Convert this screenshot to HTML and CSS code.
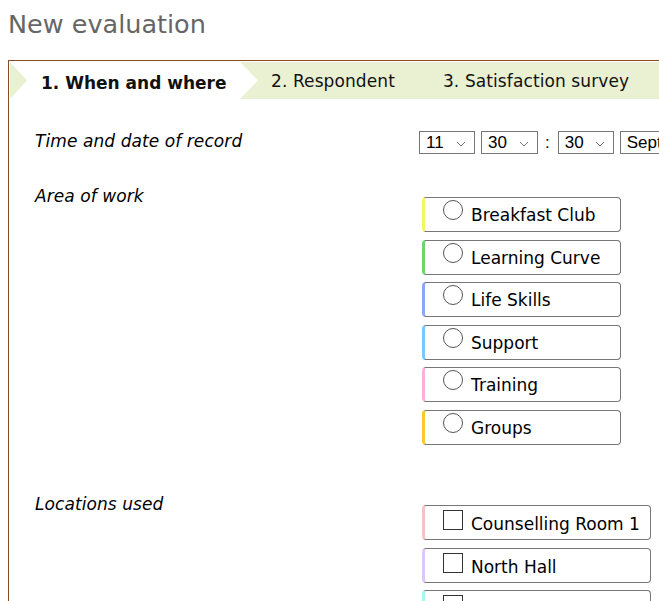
FILE: index.html
```html
<!DOCTYPE html>
<html>
<head>
<meta charset="utf-8">
<title>New evaluation</title>
<link rel="stylesheet" href="styles.css">
</head>
<body>
<h1 class="title">New evaluation</h1>
<div class="panel">
  <div class="tabbar">
    <div class="tab tab-active">1. When and where</div>
    <div class="tab tab-2">2. Respondent</div>
    <div class="tab tab-3">3. Satisfaction survey</div>
  </div>
  <div class="content">
    <div class="row">
      <div class="label">Time and date of record</div>
      <div class="controls time-row">
        <div class="sel sel-h"><span>11</span><svg class="chev" width="10" height="6" viewBox="0 0 10 6"><path d="M1 1 L5 5 L9 1" fill="none" stroke="#6d6d6d" stroke-width="1"/></svg></div>
        <div class="sel sel-m"><span>30</span><svg class="chev" width="10" height="6" viewBox="0 0 10 6"><path d="M1 1 L5 5 L9 1" fill="none" stroke="#6d6d6d" stroke-width="1"/></svg></div>
        <span class="colon">:</span>
        <div class="sel sel-s"><span>30</span><svg class="chev" width="10" height="6" viewBox="0 0 10 6"><path d="M1 1 L5 5 L9 1" fill="none" stroke="#6d6d6d" stroke-width="1"/></svg></div>
        <div class="sel sel-mon"><span>September</span><svg class="chev" width="10" height="6" viewBox="0 0 10 6"><path d="M1 1 L5 5 L9 1" fill="none" stroke="#6d6d6d" stroke-width="1"/></svg></div>
      </div>
    </div>
    <div class="row">
      <div class="label">Area of work</div>
      <div class="controls options options-radio">
        <div class="opt c-yellow"><span class="radio"></span><span class="opt-text">Breakfast Club</span></div>
        <div class="opt c-green"><span class="radio"></span><span class="opt-text">Learning Curve</span></div>
        <div class="opt c-blue"><span class="radio"></span><span class="opt-text">Life Skills</span></div>
        <div class="opt c-sky"><span class="radio"></span><span class="opt-text">Support</span></div>
        <div class="opt c-pink"><span class="radio"></span><span class="opt-text">Training</span></div>
        <div class="opt c-amber"><span class="radio"></span><span class="opt-text">Groups</span></div>
      </div>
    </div>
    <div class="row">
      <div class="label">Locations used</div>
      <div class="controls options options-check">
        <div class="opt opt-wide c-rose"><span class="check"></span><span class="opt-text">Counselling Room 1</span></div>
        <div class="opt opt-wide c-lilac"><span class="check"></span><span class="opt-text">North Hall</span></div>
        <div class="opt opt-wide c-cyan"><span class="check"></span><span class="opt-text">South Hall</span></div>
      </div>
    </div>
  </div>
</div>
</body>
</html>
```

FILE: styles.css
```css
html {
  overflow: hidden;
}
body {
  margin: 0;
  padding: 0 0 0 8px;
  font-family: "DejaVu Sans", Verdana, sans-serif;
  font-size: 17px;
  color: #000;
  background: #fff;
  width: 1000px;
}
.title {
  margin: 9px 0 21px 0;
  font-size: 25.5px;
  line-height: 30px;
  font-weight: normal;
  color: #666;
}
.panel {
  border: 1px solid #8b4a24;
  padding: 1px;
  width: 900px;
  height: 700px;
}
.tabbar {
  display: flex;
  height: 37px;
  background: #e9f1d2;
}
.tab {
  box-sizing: border-box;
  height: 37px;
  padding-top: 1px;
  line-height: 36px;
  white-space: nowrap;
  color: #111;
  letter-spacing: 0.1px;
}
.tab-active {
  width: 248px;
  padding: 6px 0 0 31px;
  line-height: 31px;
  font-weight: bold;
  letter-spacing: 0;
  background: #fff;
  clip-path: polygon(0 0, 230px 0, 248px 50%, 230px 100%, 0 100%, 17px 50%);
}
.tab-2 {
  padding-left: 13px;
  padding-right: 24px;
}
.tab-3 {
  padding-left: 24px;
  padding-right: 24px;
}
.content {
  padding: 32px 0 0 25px;
}
.row {
  display: grid;
  grid-template-columns: 384px 1fr;
  margin-bottom: 32px;
}
.label {
  font-style: italic;
  line-height: 20px;
  letter-spacing: 0.08px;
}
.time-row {
  display: flex;
  align-items: center;
}
.sel {
  display: flex;
  align-items: center;
  justify-content: space-between;
  box-sizing: border-box;
  height: 23px;
  border: 1px solid #767676;
  padding: 0 8px 0 6px;
  margin-right: 6px;
  font-family: "Liberation Sans", Arial, sans-serif;
  font-size: 17px;
  line-height: 21px;
  white-space: nowrap;
}
.sel-h { width: 56px; }
.sel-m { width: 57px; margin-right: 0; }
.sel-s { width: 56px; }
.sel-mon { width: 130px; }
.chev {
  display: block;
  margin-top: 2px;
}
.colon {
  font-family: "Liberation Sans", Arial, sans-serif;
  font-size: 17px;
  margin: 0 8px 0 7px;
  line-height: 23px;
}
.options {
  display: flex;
  flex-direction: column;
  gap: 7.6px;
  padding: 11px 0 17px 3px;
}
.opt {
  display: flex;
  align-items: flex-start;
  box-sizing: border-box;
  width: 199px;
  height: 35px;
  border: 1px solid #777;
  border-left-width: 3px;
  border-radius: 4px;
  padding: 2px 0 0 18px;
}
.opt-wide {
  width: 229px;
}
.radio {
  flex: none;
  width: 20px;
  height: 20px;
  box-sizing: border-box;
  border: 1px solid #555;
  border-radius: 50%;
  margin-right: 8px;
}
.check {
  flex: none;
  width: 20px;
  height: 20px;
  box-sizing: border-box;
  border: 1px solid #333;
  margin: 2px 8px 0 0;
}
.opt-text {
  padding-top: 5px;
  line-height: 20px;
  white-space: nowrap;
}
.options-check .opt-text {
  padding-top: 6px;
}
.c-yellow { border-left-color: #f6f65a; }
.c-green { border-left-color: #6fd66f; }
.c-blue { border-left-color: #8aa8f8; }
.c-sky { border-left-color: #78c8fa; }
.c-pink { border-left-color: #fbb0dc; }
.c-amber { border-left-color: #fcc832; }
.c-rose { border-left-color: #f4c4c4; }
.c-lilac { border-left-color: #dcc8fc; }
.c-cyan { border-left-color: #a8f4f4; }
```
